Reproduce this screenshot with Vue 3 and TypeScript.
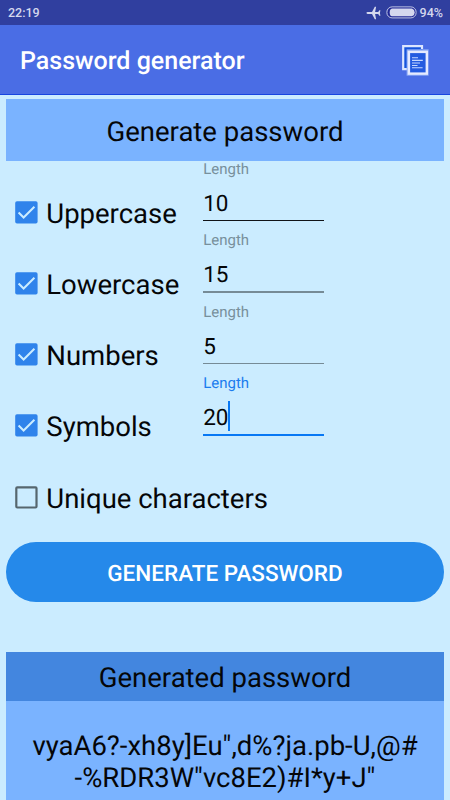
<script setup lang="ts">
import { ref } from 'vue'

interface Option {
  label: string
  checked: boolean
  length: string | null
}

const options = ref<Option[]>([
  { label: 'Uppercase', checked: true, length: '10' },
  { label: 'Lowercase', checked: true, length: '15' },
  { label: 'Numbers', checked: true, length: '5' },
  { label: 'Symbols', checked: true, length: '20' },
  { label: 'Unique characters', checked: false, length: null },
])
const focusedLabel = ref('Symbols')
const passwordLines: string[] = ['vyaA6?-xh8y]Eu",d%?ja.pb-U,@#', '-%RDR3W"vc8E2)#I*y+J"']
</script>

<template>
  <div class="screen">
    <div class="status">
      <span class="clock">22:19</span>
      <svg class="plane" viewBox="0 0 15 14" width="15" height="14">
        <path d="M0.4 7 Q0.5 6.2 1.6 6.1 L6 6 L8.8 0.7 L10.1 0.7 L9.1 6 L12.2 6 L13.4 4.3 L14.4 4.3 L13.9 7 L14.4 9.7 L13.4 9.7 L12.2 8 L9.1 8 L10.1 13.3 L8.8 13.3 L6 8 L1.6 7.9 Q0.5 7.8 0.4 7Z" fill="#d5d8ee" />
      </svg>
      <svg class="battery" viewBox="0 0 31 13" width="31" height="13">
        <rect x="0.9" y="0.9" width="29.2" height="11" rx="5.2" fill="#1f2795" stroke="#c3c8e7" stroke-width="1" />
        <path d="M6 2.5H26Q28.7 3.4 28.7 6.4T26 10.3H6Q3.7 9.9 3.7 6.4T6 2.5Z" fill="#d5d8ee" />
      </svg>
      <span class="percent">94%</span>
    </div>
    <header class="appbar">
      <h1>Password generator</h1>
      <svg class="copy" viewBox="0 0 27 31" width="27" height="31">
        <rect x="1.2" y="1.2" width="18.8" height="23" fill="#1654dc" />
        <path d="M20 4V1.2H1.2V24.2H6" fill="none" stroke="#dce6ff" stroke-width="2.2" />
        <rect x="4.6" y="4.3" width="22" height="26.4" fill="#8eabf5" />
        <rect x="6.9" y="6.9" width="17.9" height="21.7" fill="#245be0" stroke="#e5eaff" stroke-width="2.4" />
        <path d="M10 12.8H16M10 15.4H20.8M10 18H18M10 20.5H15.5M10 22.7H20.6" stroke="#c6d8ff" stroke-width="1.1" />
      </svg>
    </header>
    <main>
      <h2 class="banner">Generate password</h2>
      <section class="options">
        <div v-for="option in options" :key="option.label" class="row">
          <div class="check">
            <svg viewBox="0 0 23 23" width="23" height="23">
              <template v-if="option.checked">
                <rect x="0.2" y="0.2" width="22.4" height="22.4" rx="1.8" fill="#2f83eb" />
                <path d="M3.6 11.5L8.6 16.5L19.4 5.7" fill="none" stroke="#cbecff" stroke-width="2" />
              </template>
              <rect v-else x="1.3" y="1.3" width="20.2" height="20.2" rx="1" fill="none" stroke="#56666e" stroke-width="2.2" />
            </svg>
            <span>{{ option.label }}</span>
          </div>
          <div v-if="option.length" class="field" :class="{ focused: option.label === focusedLabel, first: option.label === 'Uppercase' }">
            <span class="hint">Length</span>
            <div class="value"><span>{{ option.length }}</span><i v-if="option.label === focusedLabel" class="caret"></i></div>
            <div class="line"></div>
          </div>
        </div>
      </section>
      <button class="generate" type="button">GENERATE PASSWORD</button>
      <section class="result">
        <h2>Generated password</h2>
        <p><span v-for="line in passwordLines" :key="line">{{ line }}</span></p>
      </section>
    </main>
  </div>
</template>

<style>
body {
  margin: 0;
  overflow: hidden;
}
</style>

<style scoped>
.screen {
  width: 450px;
  height: 800px;
  overflow: hidden;
  display: flex;
  flex-direction: column;
  background: #cbecff;
  color: #050608;
  font-family: Roboto, sans-serif;
  text-rendering: geometricPrecision;
}
h1,
h2,
p {
  margin: 0;
  font-weight: 400;
}
.status {
  flex: none;
  height: 25px;
  box-sizing: border-box;
  padding: 0 7px 0 8px;
  display: flex;
  align-items: center;
  background: #303f9f;
  color: #d5d8ee;
  font-size: 12.5px;
  font-weight: 500;
}
.clock,
.percent {
  padding-top: 2px;
}
.clock {
  flex: 1;
}
.plane {
  margin-right: 5px;
}
.battery {
  margin-right: 3px;
}
.appbar {
  flex: none;
  height: 70px;
  box-sizing: border-box;
  padding: 0 21.5px 0 20px;
  display: flex;
  align-items: center;
  justify-content: space-between;
  background: #4a6de5;
  border-bottom: 1px solid #1745e0;
  color: #fff;
}
h1 {
  padding-top: 5px;
  font-size: 25px;
  line-height: 30px;
  font-weight: 500;
}
.copy {
  margin-top: 1px;
}
main {
  padding: 4px 6px 0;
  display: flex;
  flex-direction: column;
}
.banner {
  height: 62px;
  line-height: 66px;
  background: #7ab3ff;
  text-align: center;
  font-size: 27.5px;
}
.row {
  height: 71.25px;
  display: flex;
}
.check {
  width: 197.2px;
  box-sizing: border-box;
  padding: 39.5px 0 0 9px;
  display: flex;
  align-items: flex-start;
  gap: 8.3px;
  font-size: 27.5px;
  line-height: 25.6px;
  white-space: nowrap;
}
.check svg {
  flex: none;
}
.field {
  width: 121.3px;
}
.hint {
  display: block;
  height: 18px;
  line-height: 17.4px;
  font-size: 15px;
  color: #78909c;
}
.value {
  height: 40px;
  display: flex;
  align-items: center;
  padding-top: 10px;
  box-sizing: border-box;
  font-size: 22.5px;
  margin-bottom: 1px;
}
.caret {
  width: 2.5px;
  height: 30px;
  margin-top: -3px;
  margin-left: -0.5px;
  background: #0878f4;
}
.line {
  height: 1.25px;
  background: #768b96;
}
.first .line {
  background: #101317;
}
.focused .hint {
  color: #1b7cee;
}
.focused .line {
  height: 2.5px;
  background: #0878f4;
}
.generate {
  height: 60px;
  margin: 25px 0 0;
  padding: 3px 0 0;
  border: 0;
  border-radius: 30px;
  background: #2589ea;
  color: #fff;
  font: 500 22.5px Roboto, sans-serif;
  text-rendering: geometricPrecision;
}
.result {
  margin-top: 50px;
  height: 160px;
  background: #7ab3ff;
  text-align: center;
  font-size: 27.5px;
}
.result h2 {
  height: 49px;
  line-height: 52px;
  font-size: 27.5px;
  background: #4386df;
}
.result p {
  padding-top: 29px;
  line-height: 32.2px;
}
.result p span {
  display: block;
}
</style>
